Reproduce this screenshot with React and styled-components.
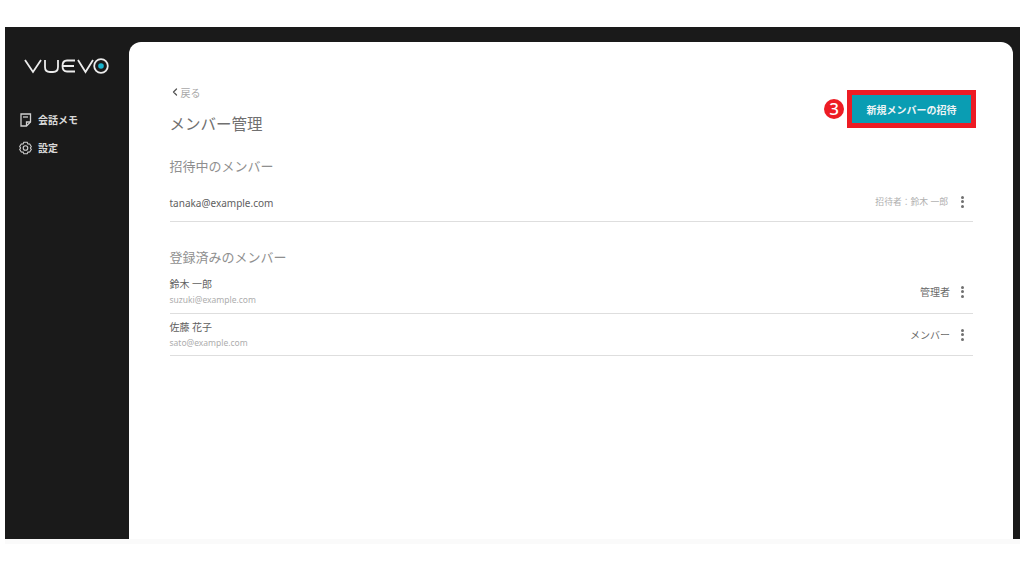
import React from "react";
import styled, { createGlobalStyle } from "styled-components";
import { ChevronLeft } from "lucide-react";

const FONT = `"Noto Sans", "Noto Sans CJK JP", sans-serif`;

const GlobalStyle = createGlobalStyle`
  html, body {
    margin: 0;
    padding: 0;
    background: #fff;
    font-family: ${FONT};
    overflow: hidden;
  }
`;

const Page = styled.div`
  width: 1024px;
  height: 576px;
  box-sizing: border-box;
  padding: 27px 4px 32px 5px;
`;

const Frame = styled.div`
  height: 517px;
  display: flex;
  flex-direction: column;
  background: #fafafa;
`;

const Window = styled.div`
  height: 512px;
  display: flex;
  background: #1a1a1a;
  padding: 15px 7px 0 0;
  box-sizing: border-box;
`;

const Sidebar = styled.nav`
  width: 124px;
  flex: none;
  display: flex;
  flex-direction: column;
`;

const LogoWrap = styled.div`
  padding: 15px 0 0 19px;
  height: 48px;
`;

const NavList = styled.div`
  display: flex;
  flex-direction: column;
  gap: 9px;
  padding: 5px 0 0 14px;
`;

const NavItem = styled.div`
  display: flex;
  align-items: center;
  gap: 6px;
  height: 19px;
  color: #d8d8d8;
  font-size: 10px;
  font-weight: 700;
`;

const Main = styled.main`
  flex: 1;
  background: #fff;
  border-radius: 12px 12px 0 0;
  padding: 41px 40px 0 40.5px;
`;

const Header = styled.div`
  display: flex;
  justify-content: space-between;
  align-items: flex-start;
`;

const BackLink = styled.div`
  display: flex;
  align-items: center;
  height: 18px;
  color: #a8a8a8;
  font-size: 10px;
  svg {
    color: #555;
    margin-left: -1px;
  }
`;

const Title = styled.h1`
  margin: 10px 0 0;
  font-size: 15.5px;
  line-height: 26px;
  font-weight: 400;
  color: #707070;
`;

const Action = styled.div`
  display: flex;
  align-items: center;
  gap: 3px;
  margin: 7px -3px 0 0;
`;

const Badge = styled.span`
  width: 20px;
  height: 20px;
  border-radius: 50%;
  background: #ed1c24;
  color: #fff;
  font-size: 17px;
  font-weight: 500;
  line-height: 20px;
  text-align: center;
`;

const InviteButton = styled.button`
  width: 129px;
  height: 38px;
  box-sizing: border-box;
  border: 5px solid #ed1c24;
  background: #0a9db3;
  color: #eef4f5;
  font-family: ${FONT};
  font-size: 10px;
  font-weight: 700;
  padding: 0;
`;

const SectionTitle = styled.h2`
  margin: ${(p) => p.$top}px 0 0;
  font-size: 13px;
  line-height: 20px;
  font-weight: 400;
  color: #8f8f8f;
`;

const Row = styled.div`
  display: flex;
  justify-content: space-between;
  align-items: center;
  height: ${(p) => p.$height}px;
  padding-top: ${(p) => p.$pad}px;
  box-sizing: border-box;
  border-bottom: 1px solid #dedede;
`;

const Email = styled.span`
  font-size: 10px;
  color: #606060;
`;

const Person = styled.div`
  display: flex;
  flex-direction: column;
  gap: 3px;
`;

const Name = styled.span`
  font-size: 10px;
  line-height: 14px;
  color: #606060;
`;

const SubEmail = styled.span`
  font-size: 8.5px;
  line-height: 12px;
  color: #adadad;
`;

const RowRight = styled.div`
  display: flex;
  align-items: center;
  gap: 8px;
  padding-right: 7px;
  margin-bottom: ${(p) => p.$raise || 0}px;
`;

const Inviter = styled.span`
  font-size: 8.8px;
  color: #b0b0b0;
  margin-right: 2px;
`;

const Role = styled.span`
  font-size: 10px;
  color: #6a6a6a;
`;

const Dots = styled.div`
  width: 8px;
  display: flex;
  flex-direction: column;
  align-items: center;
  gap: 1.5px;
  span {
    width: 3px;
    height: 3px;
    border-radius: 50%;
    background: #707070;
  }
`;

const MoreMenu = () => (
  <Dots>
    <span />
    <span />
    <span />
  </Dots>
);

const Logo = () => (
  <svg width="86" height="18" viewBox="0 0 86 18" fill="none" stroke="#ececec" strokeWidth="1.8">
    <path d="M1 3 L9 15 L17 3" />
    <path d="M21 3 V10 Q21 15 26 15 H29 Q34 15 34 10 V3" />
    <path d="M51 3.500 H43 Q38.500 3.500 38.500 9 Q38.500 14.500 43 14.500 H51 M39 9 H50" />
    <path d="M54 3 L61.500 15 L69 3" />
    <circle cx="77" cy="9" r="6.800" />
    <circle cx="77" cy="9" r="2.800" fill="#19b5cf" stroke="none" />
  </svg>
);

const NoteIcon = () => (
  <svg width="13" height="14" viewBox="0 0 13 14" fill="none" stroke="#d0d0d0" strokeWidth="1.3">
    <path d="M7.500 13 H2 V1 H11.500 V9 Z" />
    <path d="M7.500 13 V9 H11.500" />
    <path d="M4 4 H9" />
  </svg>
);

const GearIcon = () => (
  <svg width="13" height="14" viewBox="0 0 13 14" fill="none" stroke="#d0d0d0" strokeWidth="1.1">
    <path d="M4.800 1.300 H8.200 L8.900 2.900 L10.700 3 L12.300 5.500 L11.400 7 L12.300 8.500 L10.700 11 L8.900 11.100 L8.200 12.700 H4.800 L4.100 11.100 L2.300 11 L0.700 8.500 L1.600 7 L0.700 5.500 L2.300 3 L4.100 2.900 Z" />
    <circle cx="6.500" cy="7" r="2.300" />
  </svg>
);

export default function App() {
  return (
    <Page>
      <GlobalStyle />
      <Frame>
        <Window>
          <Sidebar>
            <LogoWrap>
              <Logo />
            </LogoWrap>
            <NavList>
              <NavItem>
                <NoteIcon />
                会話メモ
              </NavItem>
              <NavItem>
                <GearIcon />
                設定
              </NavItem>
            </NavList>
          </Sidebar>
          <Main>
            <Header>
              <div>
                <BackLink>
                  <ChevronLeft size={12} strokeWidth={2.6} />
                  戻る
                </BackLink>
                <Title>メンバー管理</Title>
              </div>
              <Action>
                <Badge>3</Badge>
                <InviteButton>新規メンバーの招待</InviteButton>
              </Action>
            </Header>
            <SectionTitle $top={19}>招待中のメンバー</SectionTitle>
            <Row $height={46} $pad={8}>
              <Email>tanaka@example.com</Email>
              <RowRight $raise={2}>
                <Inviter>招待者：鈴木 一郎</Inviter>
                <MoreMenu />
              </RowRight>
            </Row>
            <SectionTitle $top={25}>登録済みのメンバー</SectionTitle>
            <Row $height={47} $pad={3}>
              <Person>
                <Name>鈴木 一郎</Name>
                <SubEmail>suzuki@example.com</SubEmail>
              </Person>
              <RowRight>
                <Role>管理者</Role>
                <MoreMenu />
              </RowRight>
            </Row>
            <Row $height={42} $pad={0}>
              <Person>
                <Name>佐藤 花子</Name>
                <SubEmail>sato@example.com</SubEmail>
              </Person>
              <RowRight>
                <Role>メンバー</Role>
                <MoreMenu />
              </RowRight>
            </Row>
          </Main>
        </Window>
      </Frame>
    </Page>
  );
}
